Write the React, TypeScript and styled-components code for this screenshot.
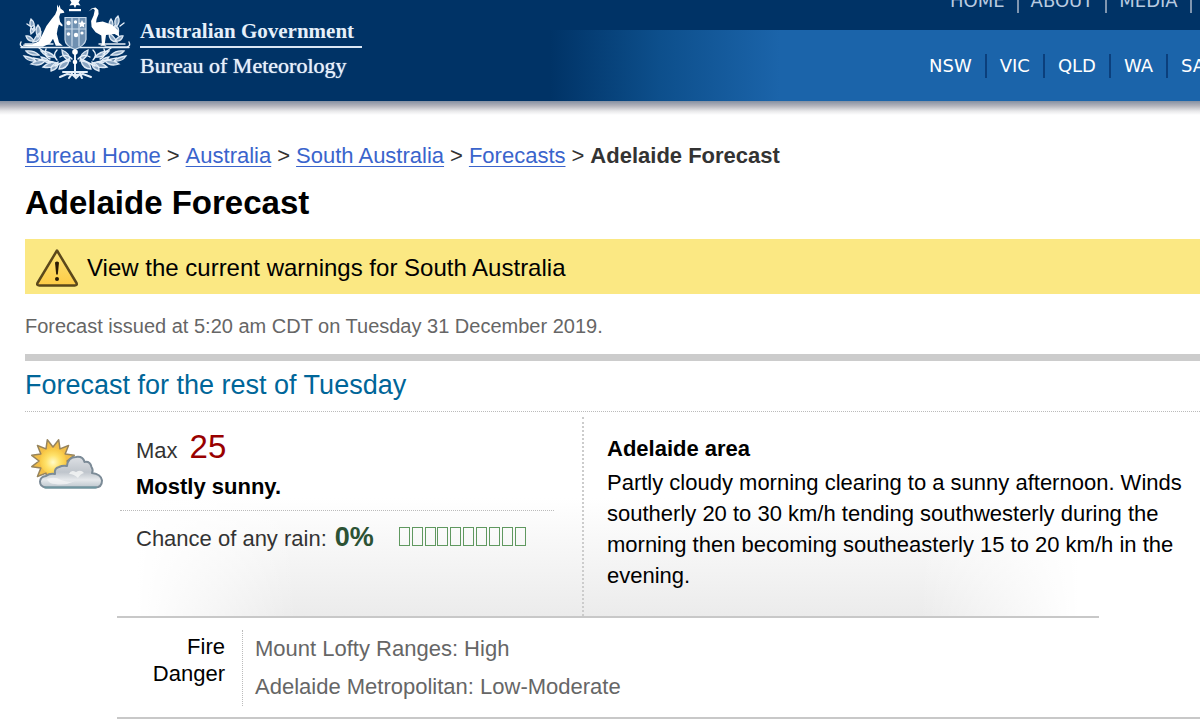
import React from 'react';
import styled, { createGlobalStyle } from 'styled-components';

const GlobalStyle = createGlobalStyle`
  *, *::before, *::after { box-sizing: border-box; }
  body {
    margin: 0;
    background: #fff;
    color: #000;
    font-family: 'Liberation Sans', Arial, Helvetica, sans-serif;
    font-size: 22px;
    overflow-x: hidden;
  }
  h1, h2, h3, p, ul, ol, dl, dd { margin: 0; padding: 0; }
  ul, ol { list-style: none; }
`;

const Header = styled.header`
  display: grid;
  grid-template-columns: 530px minmax(0, 1fr);
  background: #003366;
  overflow: hidden;
`;

const HeaderShadow = styled.div`
  height: 14px;
  background: linear-gradient(#8590a2, #b4b4bc 35%, #e8e8ea 72%, #fff);
`;

const Brand = styled.a`
  display: flex;
  align-items: flex-start;
  gap: 9px;
  padding-left: 19px;
  color: #e6f0fa;
  text-decoration: none;
`;

const BrandText = styled.span`
  display: flex;
  flex-direction: column;
  width: 222px;
  padding-top: 17px;
  font-family: 'Liberation Serif', 'Times New Roman', serif;
  white-space: nowrap;
`;

const BrandLine = styled.span<{ $rule?: boolean }>`
  font-size: ${(p) => (p.$rule ? 21 : 22)}px;
  font-weight: ${(p) => (p.$rule ? 700 : 400)};
  line-height: 28px;
  padding-bottom: ${(p) => (p.$rule ? 1 : 0)}px;
  border-bottom: ${(p) => (p.$rule ? '2px solid #dbe8f5' : 'none')};
  text-shadow: ${(p) => (p.$rule ? 'none' : '0 0 1px #e6f0fa')};
  & + & { padding-top: 4px; }
`;

const Navs = styled.div`
  display: flex;
  flex-direction: column;
  font-family: 'DejaVu Sans', Verdana, sans-serif;
  font-size: 18px;
`;

const NavBar = styled.nav<{ $states?: boolean }>`
  display: flex;
  align-items: center;
  height: ${(p) => (p.$states ? 71 : 24)}px;
  margin: ${(p) => (p.$states ? '0' : '-11px 0 17px')};
  padding-left: ${(p) => (p.$states ? 386 : 408)}px;
  background: ${(p) =>
    p.$states
      ? 'linear-gradient(to right, #003366 20px, #0d4f8c 130px, #1b64aa 250px)'
      : 'transparent'};
`;

const NavList = styled.ul<{ $rule: string; $pad: number }>`
  display: flex;
  li + li { border-left: 2px solid ${(p) => p.$rule}; }
  a { padding: 0 ${(p) => p.$pad}px; }
`;

const NavLink = styled.a<{ $color: string }>`
  display: block;
  line-height: 24px;
  color: ${(p) => p.$color};
  text-decoration: none;
`;

const Main = styled.main`
  padding: 25px 0 0 25px;
`;

const Breadcrumb = styled.ol`
  display: flex;
  line-height: 32px;
  color: #333;
  white-space: nowrap;
  li + li::before { content: '>'; padding: 0 6px; }
  a { color: #3a64cc; text-decoration: underline; text-underline-offset: 3px; text-decoration-thickness: 1px; }
`;

const PageTitle = styled.h1`
  padding-top: 11px;
  font-size: 33px;
  line-height: 40px;
`;

const Warning = styled.a`
  display: flex;
  align-items: center;
  gap: 8px;
  height: 55px;
  margin-top: 16px;
  padding: 3px 10px 0;
  background: #fbe883;
  color: #000;
  font-size: 24px;
  text-decoration: none;
`;

const Issued = styled.p`
  padding: 20px 0 16px;
  border-bottom: 7px solid #ccc;
  color: #666;
  font-size: 20px;
  line-height: 24px;
`;

const DayTitle = styled.h2`
  padding: 8px 0 9px;
  border-bottom: 1px dotted #bbb;
  color: #006699;
  font-size: 27px;
  font-weight: 400;
  line-height: 33px;
`;

const Forecast = styled.section`
  display: grid;
  grid-template-columns: 92px 465px minmax(0, 1fr);
  padding: 5px 0 2px;
  background:
    linear-gradient(#c8c8c8, #c8c8c8) 92px 100% / 982px 2px no-repeat,
    linear-gradient(to right, #fff 20px, transparent) 92px 100% / 180px 120px no-repeat,
    linear-gradient(to left, #fff 20px, transparent) 894px 100% / 180px 120px no-repeat,
    linear-gradient(#fff, #ebebeb) 92px 100% / 982px 120px no-repeat;
`;

const IconCell = styled.div`
  padding: 20px 0 0 5px;
`;

const Summary = styled.div`
  padding: 8px 28px 0 3px;
`;

const Conditions = styled.div`
  padding: 0 0 9px 16px;
  border-bottom: 1px dotted #bbb;
`;

const MaxTemp = styled.p`
  display: flex;
  align-items: baseline;
  gap: 12px;
  color: #333;
  line-height: 44px;
  strong { color: #990000; font-size: 33px; font-weight: 400; }
`;

const Outlook = styled.p`
  font-weight: 700;
  line-height: 28px;
`;

const Rain = styled.div`
  display: flex;
  align-items: baseline;
  gap: 8px;
  padding: 8px 0 0 16px;
  color: #333;
  line-height: 36px;
  strong { color: #2c5234; font-size: 27px; }
`;

const Pips = styled.span`
  display: flex;
  justify-content: space-between;
  width: 127px;
  margin-left: 17px;
`;

const Pip = styled.span`
  width: 11px;
  height: 19px;
  border: 1px solid #5f985f;
`;

const District = styled.div`
  min-height: 199px;
  padding: 16px 12px 0 23px;
  border-left: 2px dotted #ccc;
  line-height: 31px;
  h3 { font-size: 22px; line-height: 31px; padding-bottom: 3px; }
`;

const Danger = styled.dl`
  display: flex;
  margin-left: 92px;
  padding: 12px 0 11px;
  border-bottom: 2px solid #c8c8c8;
`;

const DangerLabel = styled.dt`
  width: 125px;
  padding: 3px 17px 0 0;
  line-height: 27px;
  text-align: right;
`;

const DangerValues = styled.dd`
  padding-left: 12px;
  border-left: 1px dotted #bbb;
  color: #666;
  line-height: 38px;
`;

function Kangaroo() {
  return (
    <path
      d="M38 4.500l1.600 3.200 1-3 .9 3.700 3 2.400 .9 2-4.200.7-1 3.600.9 4.700 2.600 3.200-.5 1.600-3.300-2.200-1.200 4.200-.9 5.200 2.200 8.800 3.800 3.200h-7l-2.800-7-3 4.700-6.200 2.800H10l-6-.6.4-1.300 9 .2 6.400-3.400 3.600-6.600 4-8.600 5.400-7.200 3.400-4.300 1.800-4.600z"
      fill="#fff"
    />
  );
}

function Emu() {
  return (
    <path
      d="M69.500 11.500l3.400-3.300 3.800-.7 2.600 2.600.3 4-2 5-.5 3.400 6.600-1 9.300 3.300 6 5.500 1.500 6.500-5-2.700-8.500 1-1.300 9.400 2 1.300h-6.500l1.700-1.700-.6-8.500-5.700-3.300-4-5.300-.5-6 2.500-5.600 1.200-5.300-1.800-1.700z"
      fill="#fff"
    />
  );
}

function CoatOfArms() {
  return (
    <svg width="112" height="80" viewBox="0 0 112 80" aria-hidden="true">
      <g fill="#8ba6c2" stroke="#dfeaf5" strokeWidth="1.300" strokeLinecap="round">
        <path d="M12 34q6-4 3-9q-5 2-3 9zM14 30q-5-5-2-11q5 4 2 11zM19 37q5-6 0-12q-4 5 0 12zM22 32q-5 3-8 10q8 0 8-10zM7 36q4-1 8 5q-6 1-8-5z" />
        <path d="M99 34q-6-4-3-9q5 2 3 9zM97 27q5-5 2-11q-5 4-2 11zM92 30q-4-6 0-11q4 5 0 11zM90 33q5 3 8 9q-8 0-8-9zM104 36q-4-1-8 5q6 1 8-5z" />
        <path d="M5 56q8 1 12 5q-8 1-12-5zM7 51q8-1 13 4q-9 1-13-4zM12 64q8-5 14-3q-5 6-14 3zM22 51q9 0 14 6q-9 1-14-6zM24 67q8-7 14-4q-4 6-14 4zM32 71q-1-6 7-9q1 7-7 9zM40 69q8 0 10-8q-9 0-10 8zM43 50q8 3 8 11q-8-3-8-11zM31 63q-2-5-9-6q3 6 9 6z" />
        <path d="M107 56q-8 1-12 5q8 1 12-5zM105 51q-8-1-13 4q9 1 13-4zM100 64q-8-5-14-3q5 6 14 3zM90 51q-9 0-14 6q9 1 14-6zM88 67q-8-7-14-4q4 6 14 4zM80 71q1-6-7-9q-1 7 7 9zM72 69q-8 0-10-8q9 0 10 8zM69 50q-8 3-8 11q8-3 8-11zM81 63q2-5 9-6q-3 6-9 6z" />
      </g>
      <g fill="none" stroke="#e6eff8" strokeWidth="1.400" strokeLinecap="round">
        <path d="M2 42q-2 4 2 5l20 0M110 42q2 4-2 5l-22 0M6 44h28M80 44h26M2 47.500h108" />
        <path d="M11 26l-3-2M101 26l4-3M27 49q-3 7 4 10M85 49q3 7-4 10M38 50q-5 5 0 10M74 50q5 5 0 10M41 57q7-4 12 2M71 57q-7-4-12 2M14 58l20 4M98 58l-20 4M20 48l8 6M92 48l-8 6M36 66l14-7M76 66l-14-7" />
        <path d="M41 77l7-3 8 1 8-1 8 3M50 78l3-4 4 4 4-4 2 4M44 72h24M56 47v30" strokeWidth="2" />
      </g>
      <g stroke="#c9daea" strokeWidth="1.200" fill="#6f90b1">
        <path d="M46 17.500h21v22q-1 6-11 10q-10-4-10-10z" />
        <path d="M46 29h21M53 17.500v29M60 17.500v29" fill="none" />
      </g>
      <g fill="#fff">
        <circle cx="49.500" cy="23" r="2.200" />
        <circle cx="56.500" cy="22" r="1.700" />
        <path d="M63 20l1.200 2.500 2.600.5-2 1.800.5 2.700-2.300-1.300-2.300 1.300.5-2.700-2-1.800 2.600-.5z" />
        <circle cx="49.500" cy="34" r="1.800" />
        <circle cx="57" cy="35" r="2.200" />
        <circle cx="63" cy="33" r="1.600" />
        <circle cx="56" cy="52" r="2.800" />
        <circle cx="56" cy="62" r="2.300" />
        <path d="M56-4l1.500 4 4-1-2 3.500 2 3-4-.5-1.500 3-1.500-3-4 .5 2-3-2-3.500 4 1z" />
        <path d="M50 9h12v2.200H50z" />
      </g>
      <Kangaroo />
      <Emu />
    </svg>
  );
}

function WarningIcon() {
  return (
    <svg width="44" height="40" viewBox="0 0 44 40" aria-hidden="true">
      <defs>
        <linearGradient id="warn" x1="0" y1="0" x2="0" y2="1">
          <stop offset="0" stopColor="#fbe47a" />
          <stop offset="1" stopColor="#fdcb45" />
        </linearGradient>
      </defs>
      <path d="M22 2.500L41.500 35q1 2.500-1.800 2.500H4.300Q1.500 37.500 2.500 35z" fill="url(#warn)" stroke="#5b481b" strokeWidth="2.500" strokeLinejoin="round" />
      <path d="M20 14.500q2-1.800 4 0l-1.200 12h-1.600z" fill="#2a1a05" />
      <circle cx="22" cy="31" r="2" fill="#2a1a05" />
    </svg>
  );
}

const SUN_X = 23;
const SUN_Y = 24;

// Alternates long and short radii to make the twelve rays.
const sunRays = Array.from({ length: 24 }, (_, i) => {
  const radius = i % 2 ? 14 : 22;
  const angle = ((i * 15 + 15) * Math.PI) / 180;
  return `${SUN_X + radius * Math.cos(angle)},${SUN_Y + radius * Math.sin(angle)}`;
}).join(' ');

function SunCloudIcon() {
  return (
    <svg width="74" height="54" viewBox="0 0 74 54" role="img" aria-label="Mostly sunny">
      <defs>
        <radialGradient id="sun" cx="0.500" cy="0.550" r="0.500">
          <stop offset="0" stopColor="#fffbc8" />
          <stop offset="0.550" stopColor="#ffe26a" />
          <stop offset="1" stopColor="#f9cb48" />
        </radialGradient>
        <linearGradient id="cloud" x1="0" y1="0" x2="0" y2="1">
          <stop offset="0" stopColor="#dde0e4" />
          <stop offset="0.500" stopColor="#bfc5cc" />
          <stop offset="0.750" stopColor="#e6e9ec" />
          <stop offset="1" stopColor="#bcc6cd" />
        </linearGradient>
      </defs>
      <polygon points={sunRays} fill="#f3bf48" stroke="#97845c" strokeWidth="1.500" strokeLinejoin="round" />
      <circle cx={SUN_X} cy={SUN_Y} r="13" fill="url(#sun)" />
      <path
        d="M16 50.500Q10 50 10 44.500Q10.500 39.500 16 39Q20 36 25 37Q24 31 29 30Q33 28 37 29Q38 20 46 20Q53 19 54.500 25Q60 24 61.500 30Q63.500 33 62 36Q71 37 72 43.500Q72 50.500 65 50.500z"
        fill="url(#cloud)"
        stroke="#7c8b97"
        strokeWidth="2"
        strokeLinejoin="round"
      />
      <path d="M39 37q2-5 7-2q5-3 8 1q-4 1-6 5q-4-4-9-4z" fill="#f6f7f8" opacity="0.800" />
      <path d="M17 42q8-3 14 1q8 3 14 1q-10 5-20 3q-6 0-8-5z" fill="#f6f7f8" opacity="0.700" />
      <path d="M15 50.500h51" stroke="#6f96a0" strokeWidth="2" strokeLinecap="round" />
    </svg>
  );
}

const crumbs = ['Bureau Home', 'Australia', 'South Australia', 'Forecasts'];
const siteLinks = ['HOME', 'ABOUT', 'MEDIA', 'CONTACTS'];
const stateLinks = ['NSW', 'VIC', 'QLD', 'WA', 'SA'];

interface LinkListProps {
  items: string[];
  color: string;
  rule: string;
  pad: number;
}

function LinkList({ items, color, rule, pad }: LinkListProps) {
  return (
    <NavList $rule={rule} $pad={pad}>
      {items.map((item) => (
        <li key={item}>
          <NavLink href="#" $color={color}>{item}</NavLink>
        </li>
      ))}
    </NavList>
  );
}

export default function App() {
  return (
    <>
      <GlobalStyle />
      <Header>
        <Brand href="#">
          <CoatOfArms />
          <BrandText>
            <BrandLine $rule>Australian Government</BrandLine>
            <BrandLine>Bureau of Meteorology</BrandLine>
          </BrandText>
        </Brand>
        <Navs>
          <NavBar aria-label="Site">
            <LinkList items={siteLinks} color="#b9cbe0" rule="#8096b0" pad={12} />
          </NavBar>
          <NavBar aria-label="States" $states>
            <LinkList items={stateLinks} color="#fff" rule="#0b3f7c" pad={13} />
          </NavBar>
        </Navs>
      </Header>
      <HeaderShadow />
      <Main>
        <Breadcrumb>
          {crumbs.map((crumb) => (
            <li key={crumb}><a href="#">{crumb}</a></li>
          ))}
          <li><strong>Adelaide Forecast</strong></li>
        </Breadcrumb>
        <PageTitle>Adelaide Forecast</PageTitle>
        <Warning href="#">
          <WarningIcon />
          View the current warnings for South Australia
        </Warning>
        <Issued>Forecast issued at 5:20 am CDT on Tuesday 31 December 2019.</Issued>
        <DayTitle>Forecast for the rest of Tuesday</DayTitle>
        <Forecast>
          <IconCell><SunCloudIcon /></IconCell>
          <Summary>
            <Conditions>
              <MaxTemp>Max <strong>25</strong></MaxTemp>
              <Outlook>Mostly sunny.</Outlook>
            </Conditions>
            <Rain>
              Chance of any rain: <strong>0%</strong>
              <Pips>
                {Array.from({ length: 10 }, (_, i) => <Pip key={i} />)}
              </Pips>
            </Rain>
          </Summary>
          <District>
            <h3>Adelaide area</h3>
            <p>
              Partly cloudy morning clearing to a sunny afternoon. Winds southerly 20 to 30 km/h
              tending southwesterly during the morning then becoming southeasterly 15 to 20 km/h in
              the evening.
            </p>
          </District>
        </Forecast>
        <Danger>
          <DangerLabel>Fire Danger</DangerLabel>
          <DangerValues>
            <p>Mount Lofty Ranges: High</p>
            <p>Adelaide Metropolitan: Low-Moderate</p>
          </DangerValues>
        </Danger>
      </Main>
    </>
  );
}
